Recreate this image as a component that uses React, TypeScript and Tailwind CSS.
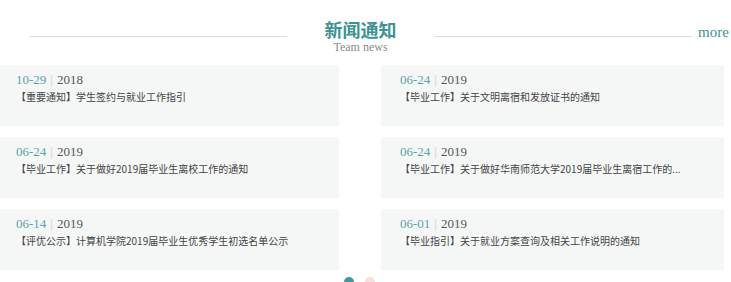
import React from "react";

const items = [
  { md: "10-29", y: "2018", t: "【重要通知】学生签约与就业工作指引" },
  { md: "06-24", y: "2019", t: "【毕业工作】关于文明离宿和发放证书的通知" },
  { md: "06-24", y: "2019", t: "【毕业工作】关于做好2019届毕业生离校工作的通知" },
  { md: "06-24", y: "2019", t: "【毕业工作】关于做好华南师范大学2019届毕业生离宿工作的..." },
  { md: "06-14", y: "2019", t: "【评优公示】计算机学院2019届毕业生优秀学生初选名单公示" },
  { md: "06-01", y: "2019", t: "【毕业指引】关于就业方案查询及相关工作说明的通知" },
];

const serif = "font-['Liberation_Serif','DejaVu_Serif',serif]";

export default function App() {
  return (
    <div className="w-[731px] h-[282px] overflow-hidden bg-white">
      <div className="flex h-[65px] pt-[19px] pl-[30px]">
        <div className="w-[257px] h-px bg-[#dcdcdc] mt-[17px]" />
        <div className="w-[147px] flex flex-col items-center">
          <div className="text-[18px] leading-[20px] font-bold text-[#3b9393] font-['Noto_Sans_CJK_SC',sans-serif]">
            新闻通知
          </div>
          <div className={`${serif} mt-[2px] text-[12px] leading-[13px] text-[#8a8a8a]`}>Team news</div>
        </div>
        <div className="w-[258px] h-px bg-[#dcdcdc] mt-[17px]" />
        <div className={`${serif} ml-[6px] mt-[5px] text-[15px] leading-[16px] text-[#3b9393]`}>more</div>
      </div>
      <div className="grid grid-cols-[339px_343px] gap-x-[42px] gap-y-[11px]">
        {items.map((it, i) => (
          <div
            key={i}
            className={`h-[61px] bg-[#f5f7f7] pt-[6px] ${i % 2 === 0 ? "pl-[16px]" : "pl-[19px]"}`}
          >
            <div className={`${serif} text-[13px] leading-[18px] [font-variant-numeric:oldstyle-nums]`}>
              <span className="text-[#5aa5a5]">{it.md}</span>
              <span className="text-[#cfcfcf] mx-[4px]">|</span>
              <span className="text-[#555]">{it.y}</span>
            </div>
            <div className="text-[10px] leading-[16px] text-[#444] whitespace-nowrap font-['Noto_Sans_CJK_SC',sans-serif]">
              {it.t}
            </div>
          </div>
        ))}
      </div>
      <div className="flex ml-[344px] mt-[7px] gap-[11px]">
        <div className="w-[10px] h-[10px] rounded-full bg-[#3b9a9a]" />
        <div className="w-[10px] h-[10px] rounded-full bg-[#f8dede]" />
      </div>
    </div>
  );
}
